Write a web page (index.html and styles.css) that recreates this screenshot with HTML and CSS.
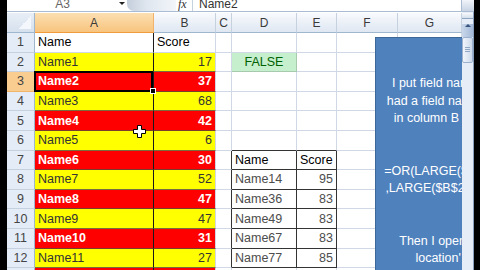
FILE: index.html
```html
<!DOCTYPE html>
<html lang="en">
<head>
  <meta charset="UTF-8">
  <meta name="viewport" content="width=device-width, initial-scale=1.0">
  <title>Top 5 scores</title>
  <link rel="stylesheet" href="styles.css">
</head>
<body>

  <div class="excel">

    <div class="formula-bar">
      <div class="name-box">A3</div>
      <div class="name-arrow"><span></span></div>
      <div class="bar-btns"></div>
      <div class="fx">fx</div>
      <div class="formula">Name2</div>
      <div class="expand"></div>
    </div>

    <div class="main">
      <div class="sheet">
        <table class="grid">
          <colgroup>
            <col class="w-hdr"><col class="w-a"><col class="w-b"><col class="w-c">
            <col class="w-d"><col class="w-e"><col class="w-f"><col class="w-g">
          </colgroup>
          <tr class="hdr">
            <th class="corner"></th>
            <th class="col sel">A</th>
            <th class="col">B</th>
            <th class="col">C</th>
            <th class="col">D</th>
            <th class="col">E</th>
            <th class="col">F</th>
            <th class="col">G</th>
          </tr>
          <tr>
            <th class="row">1</th>
            <td class="a">Name</td><td>Score</td><td></td><td></td><td></td><td></td><td></td>
          </tr>
          <tr>
            <th class="row">2</th>
            <td class="y a">Name1</td><td class="y num">17</td><td></td><td class="ok">FALSE</td><td></td><td></td><td></td>
          </tr>
          <tr>
            <th class="row sel">3</th>
            <td class="r a cur">Name2<span class="handle"></span></td><td class="r num">37</td><td></td><td></td><td></td><td></td><td></td>
          </tr>
          <tr>
            <th class="row">4</th>
            <td class="y a">Name3</td><td class="y num">68</td><td></td><td></td><td></td><td></td><td></td>
          </tr>
          <tr>
            <th class="row">5</th>
            <td class="r a">Name4</td><td class="r num">42</td><td></td><td></td><td></td><td></td><td></td>
          </tr>
          <tr>
            <th class="row">6</th>
            <td class="y a">Name5</td><td class="y num">6</td><td></td><td class="tb"></td><td class="tb"></td><td></td><td></td>
          </tr>
          <tr>
            <th class="row">7</th>
            <td class="r a">Name6</td><td class="r num">30</td><td class="tc"></td><td class="t">Name</td><td class="t">Score</td><td></td><td></td>
          </tr>
          <tr>
            <th class="row">8</th>
            <td class="y a">Name7</td><td class="y num">52</td><td class="tc"></td><td class="t gr">Name14</td><td class="t gr num">95</td><td></td><td></td>
          </tr>
          <tr>
            <th class="row">9</th>
            <td class="r a">Name8</td><td class="r num">47</td><td class="tc"></td><td class="t gr">Name36</td><td class="t gr num">83</td><td></td><td></td>
          </tr>
          <tr>
            <th class="row">10</th>
            <td class="y a">Name9</td><td class="y num">47</td><td class="tc"></td><td class="t gr">Name49</td><td class="t gr num">83</td><td></td><td></td>
          </tr>
          <tr>
            <th class="row">11</th>
            <td class="r a">Name10</td><td class="r num">31</td><td class="tc"></td><td class="t gr">Name67</td><td class="t gr num">83</td><td></td><td></td>
          </tr>
          <tr>
            <th class="row">12</th>
            <td class="y a">Name11</td><td class="y num">27</td><td class="tc"></td><td class="t gr">Name77</td><td class="t gr num">85</td><td></td><td></td>
          </tr>
          <tr>
            <th class="row">13</th>
            <td class="r a">Name12</td><td class="r num">58</td><td></td><td></td><td></td><td></td><td></td>
          </tr>
        </table>

        <!-- text box drawn over column G -->
        <div class="shape">
          <p>I put field names in A<br>had a field name in the<br>in column B so I can</p>
          <p>=OR(LARGE($B$2:$B$<br>,LARGE($B$2:$B$12,2</p>
          <p>Then I opened the<br>location' box</p>
        </div>

        <svg class="cursor" width="13" height="13" viewBox="0 0 13 13">
          <path d="M4.5 0.5h4v4h4v4h-4v4h-4v-4h-4v-4h4z" fill="#fff" stroke="#000" stroke-width="1"/>
        </svg>
      </div>

      <div class="vscroll">
        <div class="vs-split"></div>
        <div class="vs-up"><span></span></div>
        <div class="vs-thumb"><i></i><i></i><i></i></div>
      </div>
    </div>

  </div>

</body>
</html>
```

FILE: styles.css
```css
body {
  margin: 0;
  background-color: #000;
  font-family: "Liberation Sans", Arial, sans-serif;
}
.excel {
  margin-left: 7px;
  width: 467px;
  height: 270px;
  background-color: #fff;
  overflow: hidden;
}

/* formula bar, cut off at the top */
.formula-bar {
  display: flex;
  height: 11px;
  border-bottom: 1px solid #a9bcd4;
  font-size: 12px;
  line-height: 9px;
  color: #222;
  overflow: hidden;
}
.name-box {
  width: 111px;
  text-align: center;
  color: #666;
}
.name-arrow {
  width: 9px;
}
.name-arrow span {
  display: block;
  margin: 2px 0 0 1px;
  width: 0;
  height: 0;
  border-left: 3px solid transparent;
  border-right: 3px solid transparent;
  border-top: 3px solid #222;
}
.bar-btns {
  width: 49px;
  background: linear-gradient(to right, #c4cedb, #dfe6ef 40%, #f3f6fa);
  border-radius: 0 0 0 7px;
}
.fx {
  width: 14px;
  font-family: "Liberation Serif", serif;
  font-style: italic;
  color: #333;
  padding-left: 2px;
}
.formula {
  flex: 1;
  padding-left: 6px;
  border-left: 1px solid #c5d1de;
  color: #333;
}
.expand {
  width: 12px;
  background: linear-gradient(#f1f4f9, #c8d4e4);
  border-left: 1px solid #a9bcd4;
}

.main {
  display: flex;
  height: 258px;
}
.sheet {
  position: relative;
  width: 455px;
  padding-top: 1px;
  overflow: hidden;
}

/* grid */
.grid {
  border-collapse: separate;
  border-spacing: 0;
  table-layout: fixed;
  width: 455px;
}
.w-hdr { width: 28px; }
.w-a { width: 119px; }
.w-b { width: 62px; }
.w-c { width: 16px; }
.w-d { width: 65px; }
.w-e { width: 40px; }
.w-f { width: 61px; }
.w-g { width: 64px; }

.grid tr { height: 19.6px; }
.grid tr.hdr { height: 20px; }
.grid td,
.grid th {
  box-sizing: border-box;
  padding: 0 3px;
  border-right: 1px solid #d0d7e5;
  border-bottom: 1px solid #d0d7e5;
  font-size: 12.5px;
  font-weight: normal;
  white-space: nowrap;
  overflow: hidden;
  text-align: left;
  color: #000;
}
.grid th.col {
  background: linear-gradient(#f8fafd, #dfe7f2);
  border-right-color: #c5d1de;
  border-bottom-color: #9eb6ce;
  text-align: center;
  font-size: 12px;
  color: #3a3a3a;
}
.grid th.col.sel {
  background: linear-gradient(#fcdfb2, #f8c47e);
  border-right-color: #f1b36b;
  border-bottom-color: #f29b3b;
}
.grid th.corner {
  position: relative;
  background: linear-gradient(#e8eef6, #d6e1ee);
  border-right-color: #9eb6ce;
  border-bottom-color: #9eb6ce;
}
.grid th.corner::after {
  content: "";
  position: absolute;
  right: 3px;
  bottom: 3px;
  width: 13px;
  height: 13px;
  background: linear-gradient(135deg, transparent 50%, #f4f7fb 50%);
}
.grid th.row {
  padding: 0;
  background-color: #e4ecf7;
  border-right-color: #9eb6ce;
  border-bottom-color: #c5d1de;
  text-align: center;
  color: #444;
}
.grid th.row.sel {
  background-color: #f9cd90;
  border-bottom-color: #f1b36b;
}

.grid td.a { border-right-color: #1a1a1a; }
.grid td.num { text-align: right; }
.grid td.y {
  background-color: #ffff00;
  color: #333;
  border-bottom-color: #7a6c3c;
}
.grid td.r {
  background-color: #ff0000;
  color: #fff;
  font-weight: bold;
  border-bottom-color: #7a3c2c;
}
.grid td.ok {
  background-color: #c6efce;
  color: #006100;
  text-align: center;
  border-right-color: #a7c9ad;
  border-bottom-color: #a7c9ad;
}

/* small table D7:E12 */
.grid td.t {
  border-right-color: #333;
  border-bottom-color: #333;
}
.grid td.tb { border-bottom-color: #333; }
.grid td.tc { border-right-color: #333; }
.grid td.gr { color: #4d4d4d; }

/* active cell */
.grid td.cur {
  position: relative;
  overflow: visible;
}
.grid td.cur::after {
  content: "";
  position: absolute;
  left: -1px;
  top: -1px;
  right: 0;
  bottom: -1px;
  border: 2px solid #000;
}
.handle {
  position: absolute;
  right: -3px;
  bottom: -3px;
  width: 4px;
  height: 4px;
  background-color: #000;
  border: 1px solid #fff;
  z-index: 1;
}

/* text box over column G */
.shape {
  position: absolute;
  left: 368px;
  top: 25px;
  width: 150px;
  height: 260px;
  box-sizing: border-box;
  padding-top: 37px;
  background-color: #4f81bd;
  border: 1px solid #3d6797;
  color: #fff;
  text-align: center;
  font-size: 12.5px;
  line-height: 17.5px;
}
.shape p {
  margin: 0 0 35px;
}

.cursor {
  position: absolute;
  left: 126px;
  top: 113px;
}

/* vertical scrollbar */
.vscroll {
  width: 11px;
  background-color: #e6edf7;
  border-right: 1px solid #8aa0bd;
}
.vs-split {
  height: 5px;
  margin-top: 1px;
  background: linear-gradient(#f7f9fc, #d3deeb);
  border-bottom: 1px solid #8fa6c2;
}
.vs-up {
  height: 13px;
  background: linear-gradient(to right, #c9d7e9, #a3b9d8);
}
.vs-up span {
  display: block;
  margin: 5px auto 0;
  width: 0;
  height: 0;
  border-left: 3px solid transparent;
  border-right: 3px solid transparent;
  border-bottom: 3px solid #3a557d;
}
.vs-thumb {
  height: 26px;
  box-sizing: border-box;
  padding-top: 9px;
  background: linear-gradient(to right, #f1f5fb, #cddaeb);
  border: 1px solid #9cb1ce;
  border-radius: 2px;
}
.vs-thumb i {
  display: block;
  margin: 0 2px 1px;
  height: 1px;
  background-color: #8fa6c4;
}
```
